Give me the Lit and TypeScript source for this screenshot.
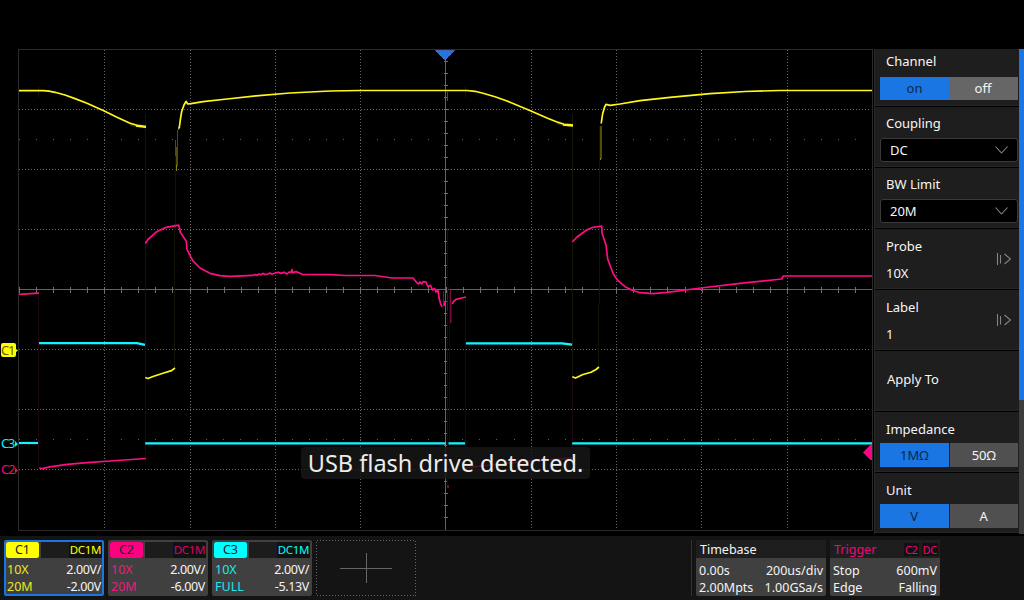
import { LitElement, html, svg, css } from "lit";
import { customElement, property } from "lit/decorators.js";
import { classMap } from "lit/directives/class-map.js";

const range = (n: number) => Array.from({ length: n }, (_, i) => i);

/* ---------- Waveform display ---------- */

const VLINES = [104, 190, 275, 360, 531, 616, 701, 787];
const HLINES = [109, 169, 229, 349, 409, 469];

const YELLOW = [
  "M19 90.6H43L49 91.2L55 92.3L65 95L75 98.6L87 103.3L104.3 111L117 117.3L130 123.3L137 125.3L146 126.7",
  "M179.2 128.5L180.3 120L181.7 111.5L184 105L186 101.3L187.7 104L191 103.7L203 101.7L227 99L256 95.8L290 93L330 91L360 90.5H467L475 91.3L483 93.3L495 96.7L507 101L531 111L547 118L557 122L564 124.3L573 125.2",
  "M145.3 377.5L148 378.5L153 376.5L163 373.3L171.5 370.6L175 368",
  "M601.2 123.5L602.6 114L604.6 107L606 104.4L610 105.3L620 104L640 100.7L670 97.3L710 93.6L745 91.5L780 90.5H872",
  "M572.3 376.7L575.5 378L583 374.5L591 372.3L596 369.5L599 367",
];

const PINK = [
  "M19 294.3L39 293.2",
  "M39.3 468.2L42 468.7L50 466.8L67 464.4L87 462.6L110 461L146 458.5",
  "M145.3 243.5L148 239.5L156.7 231.7L165 227.7L178.6 225.2L179.5 228L180.3 232.3L183.3 236.7L186.3 241.3L187 249.3L192.7 260.7L200 268L210 273.3L220 275.7L230 276.4L253 275.3",
  "M253 275.3L255 274.5L257 275.4L259 274L261 274.8L263 273.4L265 274.6L268 274L270 273L272 274.2L275 273L278 272.3L281 273.4L284 272.2L287 274L289 272L291 272.6L292 269.6L293 272.8L296 271.6L299 272.8L302 274.3L330 274.6L345 275.5L375 275.5L392 278L413 278L417.3 283.3L418.7 284L420 282L421.7 284L423 281.7L425.7 281.8L428 286.6L430.5 285.3L432.5 290L434.5 288.5L436 292L438 290.5L439.3 299L440.7 304L442 307",
  "M444.2 306L445.4 301",
  "M452.4 304L453.5 301.5L456 299.3L466 297",
  "M466 468L494 464.5L530 461L572 458",
  "M572.3 242L577 237L586.7 230L593 227.3L601.7 226L602 233L606 245L607.7 259L613.3 274L618 280.7L625 286.7L631.7 290L640 292.7L653 293.6L667 292.3L701 288L740 283.3L781.7 279L783.3 276H872",
];

const CYAN = [
  "M19 443H38",
  "M39 343.2H137L145 344.8",
  "M145.3 443.3H446M448.5 443.3H465",
  "M466 343.3H562L572 344.7",
  "M572.3 443.3H872",
];

@customElement("scope-display")
class ScopeDisplay extends LitElement {
  static styles = css`
    :host { display: block; width: 874px; height: 485px; }
    .plot { display: block; }
    .crisp { shape-rendering: crispEdges; }
    .frame { fill: none; stroke: #2b2b2b; }
    .dots { stroke: #6a6a6a; stroke-dasharray: 1 2; fill: none; }
    .axis { fill: #626262; }
    .tick { fill: #707070; }
    .sparse { fill: #5c5c5c; }
    .trace { fill: none; stroke-width: 1.7; stroke-linejoin: round; }
    .glow { fill: none; stroke-width: 3.5; opacity: 0.15; }
    .yellow { stroke: #fff81a; }
    .pink { stroke: #ff0d84; }
    .cyan { stroke: #12f4ff; stroke-width: 2.2; }
    .edge-y { fill: #151503; }
    .edge-o { fill: #4f4d08; }
    .edge-g { fill: #8a8610; }
    .edge-p { fill: #1c0611; }
    .edge-m { fill: #780b43; }
    .mark { font: 13px "Noto Sans", sans-serif; }
  `;

  render() {
    return html`<svg class="plot" width="874" height="485" viewBox="0 49 874 485">
      <g class="crisp">
        ${VLINES.map((x) => svg`<path class="dots" d="M${x + 0.5} 50V530" />`)}
        ${HLINES.map((y) => svg`<path class="dots" d="M19 ${y + 0.5}H871" />`)}
        <rect class="frame" x="18.5" y="49.5" width="854" height="481" />
        ${[139, 439].map((y) =>
          range(50).map((i) => svg`<rect class="sparse" x=${Math.floor(19 + i * 17.07)} y=${y} width="1" height="1" />`)
        )}
        <rect class="axis" x="19" y="289" width="853" height="1" />
        <rect class="axis" x="445" y="50" width="1" height="480" />
        ${range(50).map((i) => svg`<rect class="tick" x=${Math.floor(19.3 + i * 17.07)} y="287" width="1" height="6" />`)}
        ${range(39).map((i) => svg`<rect class="tick" x="444" y=${61 + i * 12} width="4" height="1" />`)}

        <rect class="edge-y" x="38" y="86" width="1" height="11" />
        <rect class="edge-y" x="465" y="86" width="1" height="11" />
        <rect class="edge-y" x="145" y="114" width="1" height="263" />
        <rect class="edge-y" x="175" y="140" width="1" height="90" />
        <rect class="edge-y" x="174" y="224" width="1" height="144" />
        <rect class="edge-o" x="175" y="140" width="1" height="16" />
        <rect class="edge-o" x="176" y="147" width="1" height="24" />
        <rect class="edge-g" x="176" y="165" width="1" height="6" />
        <rect class="edge-o" x="177" y="130" width="1" height="36" />
        <rect class="edge-g" x="178" y="127" width="1" height="3" />
        <rect class="edge-o" x="447" y="92" width="1" height="9" />
        <rect class="edge-y" x="572" y="114" width="1" height="263" />
        <rect class="edge-y" x="599" y="126" width="1" height="178" />
        <rect class="edge-y" x="598" y="304" width="1" height="63" />
        <rect class="edge-o" x="600" y="126" width="2" height="33" />
        <rect class="edge-g" x="600" y="158" width="1" height="2" />

        <rect class="edge-p" x="38" y="293" width="1" height="175" />
        <rect class="edge-p" x="145" y="377" width="1" height="82" />
        <rect class="edge-p" x="447" y="227" width="1" height="260" />
        <rect class="edge-p" x="449" y="286" width="1" height="170" />
        <rect class="edge-p" x="465" y="297" width="1" height="172" />
        <rect class="edge-p" x="572" y="378" width="1" height="80" />
        <rect class="edge-m" x="447" y="291" width="1" height="20" opacity="0.6" />
        <rect class="edge-m" x="450" y="290" width="1" height="33" />
        <rect class="edge-m" x="451" y="300" width="1" height="23" opacity="0.5" />
        <rect class="edge-m" x="438" y="291" width="1" height="8" />
        <rect class="edge-m" x="443" y="291" width="1" height="15" />
        <rect class="edge-m" x="447" y="485" width="2" height="3" />
      </g>

      ${YELLOW.map((d) => svg`<path class="trace yellow" d=${d} />`)}
      <path class="glow yellow" d="M130 124L137 125.8L146 126.7M557 122.5L564 124.5L573 125.2" />
      <path class="trace yellow" d="M136 126L146 127.2M563 124.8L573 125.8" />
      ${PINK.map((d) => svg`<path class="trace pink" d=${d} />`)}
      ${CYAN.map((d) => svg`<path class="glow cyan" d=${d} /><path class="trace cyan" d=${d} />`)}

      <path d="M435.5 50.5H454.5L445 60Z" fill="#1e78e4" stroke="#8a7de8" stroke-dasharray="1 1" />
      <path d="M872 444V460H870.5L863 452.5L871 444Z" fill="#ff0088" />

      <path d="M3 343H14Q16 343 16 345V349L18 350.5L16 352V355Q16 357 14 357H3Q1 357 1 355V345Q1 343 3 343Z" fill="#ffff00" />
      <text class="mark" x="1" y="354.5" fill="#6a5a00" textLength="14.5">C1</text>
      <text class="mark" x="1" y="448" fill="#00f4ff" textLength="14.5">C3</text>
      <path d="M15 441L18 444L15 447Z" fill="#00f4ff" />
      <text class="mark" x="1" y="474.4" fill="#ff0080" textLength="14.5">C2</text>
      <path d="M15 467.5L18 470.5L15 473.5Z" fill="#ff0080" />
    </svg>`;
  }
}

/* ---------- Side menu ---------- */

type Item = {
  kind: "toggle" | "select" | "link" | "action";
  label: string;
  value?: string;
  options?: string[];
  soft?: boolean;
};

const MENU: Item[] = [
  { kind: "toggle", label: "Channel", options: ["on", "off"], soft: true },
  { kind: "select", label: "Coupling", value: "DC" },
  { kind: "select", label: "BW Limit", value: "20M" },
  { kind: "link", label: "Probe", value: "10X" },
  { kind: "link", label: "Label", value: "1" },
  { kind: "action", label: "Apply To" },
  { kind: "toggle", label: "Impedance", options: ["1MΩ", "50Ω"] },
  { kind: "toggle", label: "Unit", options: ["V", "A"] },
];

@customElement("side-menu")
class SideMenu extends LitElement {
  static styles = css`
    :host {
      display: flex; box-sizing: border-box; width: 150px; height: 485px;
      border-left: 1px solid #2a2a2a; overflow: hidden;
      font: 13px/18px "Noto Sans", sans-serif; color: #f6f6f6;
    }
    .items { width: 144px; height: 485px; background: #1e1e1e; overflow: hidden; }
    .item {
      box-sizing: border-box; height: 61px; padding: 8px 1px 0 5px;
      border-bottom: 1px solid #000;
      box-shadow: inset 0 -1px #262626;
    }
    .item.first { height: 58px; padding-top: 3px; }
    .label { padding-left: 6px; height: 23px; }
    .item.select-row { padding-top: 7px; }
    .select-row .label { height: 24px; }
    .first .label { height: 25px; }
    .toggle { display: flex; gap: 1px; height: 24px; line-height: 24px; text-align: center; }
    .toggle.soft { gap: 0; height: 23px; line-height: 23px; }
    .opt { flex: 1; background: #505050; }
    .soft .opt { background: #666; }
    .soft .opt + .opt { text-indent: -1px; }
    .opt.active { background: #1a76e2; color: #0a2747; }
    .select {
      display: flex; align-items: center; justify-content: space-between;
      box-sizing: border-box; height: 24px; padding: 0 9px;
      border: 1px solid #3a3a3a; border-radius: 3px; background: #000;
    }
    .link { display: flex; justify-content: space-between; padding: 0 7px 0 6px; }
    .value { padding-top: 4px; }
    .arrow { margin-top: -8px; }
    .action { padding: 11px 0 0 7px; }
    .icon { fill: none; stroke: #858585; stroke-width: 1.1; display: block; }
    .track { width: 5px; background: #3c3c3c; }
    .thumb { height: 351px; background: #1a76e2; }
  `;

  private body(it: Item) {
    if (it.kind === "toggle")
      return html`<div class="label">${it.label}</div>
        <div class=${classMap({ toggle: true, soft: !!it.soft })}>
          ${it.options!.map((o, i) => html`<div class=${classMap({ opt: true, active: i === 0 })}>${o}</div>`)}
        </div>`;
    if (it.kind === "select")
      return html`<div class="label">${it.label}</div>
        <div class="select">${it.value}
          <svg class="icon" width="13" height="8" viewBox="0 0 13 8"><path d="M.5 .5L6.5 7L12.5 .5" /></svg>
        </div>`;
    if (it.kind === "link")
      return html`<div class="label">${it.label}</div>
        <div class="link"><span class="value">${it.value}</span>
          <svg class="icon arrow" width="15" height="14" viewBox="0 0 15 14"><path d="M1.5 1V13M4.5 3V11.5M8.5 2L14.5 7L8.5 12" /></svg>
        </div>`;
    return html`<div class="action">${it.label}</div>`;
  }

  render() {
    return html`<div class="items">
        ${MENU.map((it, i) => html`<div class=${classMap({ item: true, first: i === 0, "select-row": it.kind === "select" })}>${this.body(it)}</div>`)}
      </div>
      <div class="track"><div class="thumb"></div></div>`;
  }
}

/* ---------- Bottom status bar ---------- */

@customElement("channel-card")
class ChannelCard extends LitElement {
  @property() name = "";
  @property() color = "";
  @property() bw = "";
  @property() offset = "";
  @property({ type: Boolean }) selected = false;

  static styles = css`
    :host { display: block; font: 12.5px/17px "Noto Sans", sans-serif; color: #f4f4f4; }
    .card { box-sizing: border-box; width: 100px; height: 56px; padding: 1px; background: #404040; border-radius: 2px; border: 1px solid #404040; }
    .card.selected { border: 2px solid #1a76e2; padding: 0; }
    .head { display: flex; justify-content: space-between; height: 16px; background: #1c1c1c; line-height: 16px; }
    .tag { width: 33px; border-radius: 2px; text-align: center; color: #222; background: var(--tone); }
    .sep { width: 2px; background: #404040; margin-right: auto; }
    .mode { padding: 0 1px; font-size: 11.5px; letter-spacing: -0.35px; color: var(--tone); background: #111; }
    .row { display: flex; justify-content: space-between; padding: 0 1px; }
    .rows { padding-top: 3px; }
    .right { letter-spacing: -0.35px; }
    .left { color: var(--tone); }
    .yellow { --tone: #ffff00; }
    .pink { --tone: #ff0080; }
    .cyan { --tone: #00ffff; }
    .yellow .left { --tone: #e9e91c; }
    .pink .left { --tone: #e81c7c; }
    .cyan .left { --tone: #1ce8e8; }
    .pink .mode { --tone: #d8046e; }
  `;

  render() {
    return html`<div class=${classMap({ card: true, selected: this.selected, [this.color]: true })}>
      <div class="head"><span class="tag">${this.name}</span><span class="sep"></span><span class="mode">DC1M</span></div>
      <div class="rows">
        <div class="row"><span class="left">10X</span><span class="right">2.00V/</span></div>
        <div class="row"><span class="left">${this.bw}</span><span class="right">${this.offset}</span></div>
      </div>
    </div>`;
  }
}

@customElement("app-root")
class AppRoot extends LitElement {
  static styles = css`
    :host {
      display: flex; flex-direction: column; position: relative; width: 1024px; height: 600px;
      background: #000; overflow: hidden; font: 12.5px/17px "Noto Sans", sans-serif; color: #f4f4f4;
    }
    .top { height: 49px; }
    .main { display: flex; height: 485px; }
    .bar {
      display: flex; box-sizing: border-box; gap: 4px; margin-top: 2px; height: 64px;
      padding: 4px; background: #141414;
    }
    .slot { width: 100px; height: 56px; display: block; }
    .spacer { flex: 1; border-right: 1px solid #333; }
    .info { height: 56px; background: #404040; border-radius: 2px; }
    .timebase { width: 130px; }
    .trigger { width: 110px; margin-right: 80px; }
    .head { display: flex; height: 18px; line-height: 19px; padding: 0 2px 0 4px; background: #1e1e1e; justify-content: space-between; }
    .pinkish { color: #f0047c; }
    .chips { display: flex; gap: 3px; font-size: 11px; letter-spacing: -0.3px; }
    .chip { background: #111; height: 13px; line-height: 13px; margin-top: 3px; padding: 0 1px; }
    .rows { padding: 4px 3px 0; }
    .row { display: flex; justify-content: space-between; }
    .toast {
      position: absolute; left: 301px; top: 447px; width: 289px; height: 32px; border-radius: 4px;
      background: rgba(24, 24, 24, 0.8); text-align: center; font-size: 23.5px; line-height: 33px; white-space: nowrap;
      color: #ececec;
    }
  `;

  render() {
    return html`
      <div class="top"></div>
      <div class="main">
        <scope-display></scope-display>
        <side-menu></side-menu>
      </div>
      <div class="bar">
        <channel-card name="C1" color="yellow" bw="20M" offset="-2.00V" selected></channel-card>
        <channel-card name="C2" color="pink" bw="20M" offset="-6.00V"></channel-card>
        <channel-card name="C3" color="cyan" bw="FULL" offset="-5.13V"></channel-card>
        <svg class="slot" viewBox="0 0 100 56" shape-rendering="crispEdges">
          <rect x=".5" y=".5" width="99" height="55" fill="none" stroke="#666" stroke-dasharray="1 2" />
          <path d="M24 28.5H76M50.5 13V43" stroke="#666" />
        </svg>
        <div class="spacer"></div>
        <div class="info timebase">
          <div class="head">Timebase</div>
          <div class="rows">
            <div class="row"><span>0.00s</span><span>200us/div</span></div>
            <div class="row"><span>2.00Mpts</span><span>1.00GSa/s</span></div>
          </div>
        </div>
        <div class="info trigger">
          <div class="head pinkish">Trigger
            <div class="chips"><span class="chip">C2</span><span class="chip">DC</span></div>
          </div>
          <div class="rows">
            <div class="row"><span>Stop</span><span>600mV</span></div>
            <div class="row"><span>Edge</span><span>Falling</span></div>
          </div>
        </div>
      </div>
      <div class="toast">USB flash drive detected.</div>
    `;
  }
}
